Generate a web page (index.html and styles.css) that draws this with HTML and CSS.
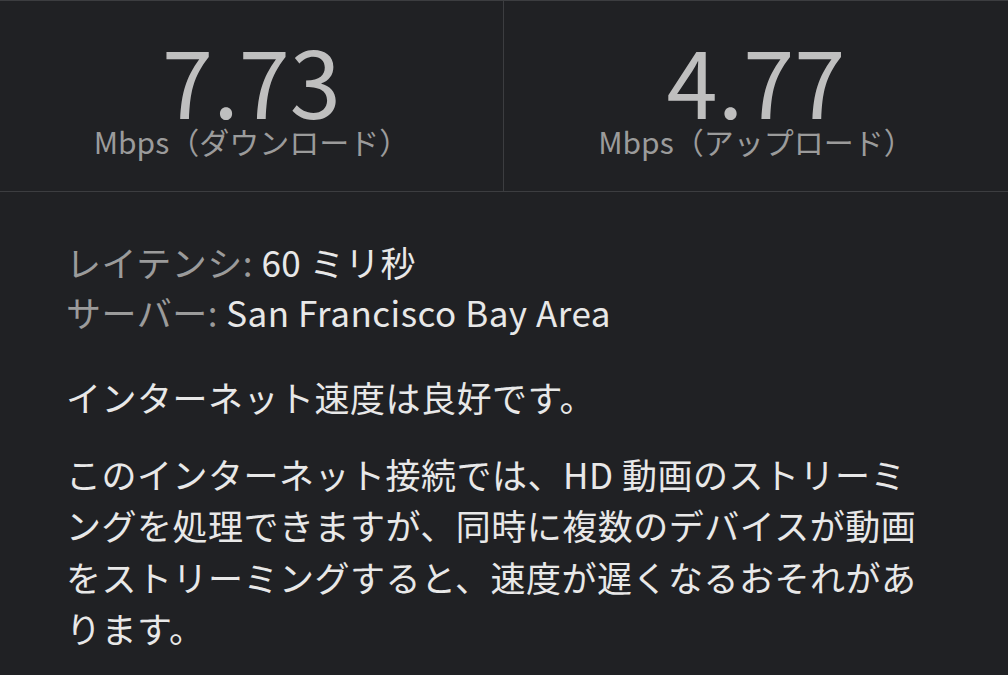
FILE: index.html
```html
<!DOCTYPE html>
<html lang="ja">
<head>
<meta charset="utf-8">
<link rel="stylesheet" href="styles.css">
</head>
<body>
<div class="stats">
  <div class="stat">
    <div class="value">7.73</div>
    <div class="unit">Mbps（ダウンロード）</div>
  </div>
  <div class="stat stat-right">
    <div class="value">4.77</div>
    <div class="unit">Mbps（アップロード）</div>
  </div>
</div>
<div class="details">
  <div class="meta">
    <div class="row"><span class="label">レイテンシ:</span> <span class="val">60 ミリ秒</span></div>
    <div class="row"><span class="label">サーバー:</span> <span class="val">San Francisco Bay Area</span></div>
  </div>
  <p class="summary">インターネット速度は良好です。</p>
  <p class="desc">このインターネット接続では、HD 動画のストリーミングを処理できますが、同時に複数のデバイスが動画をストリーミングすると、速度が遅くなるおそれがあります。</p>
</div>
</body>
</html>
```

FILE: styles.css
```css
html, body {
  margin: 0;
  padding: 0;
  background: #202124;
  font-family: "Noto Sans CJK JP", "Noto Sans", sans-serif;
  width: 1008px;
  height: 675px;
  overflow: hidden;
}

.stats {
  display: grid;
  grid-template-columns: 503px 1fr;
  border-top: 1px solid #3c3d40;
  border-bottom: 1px solid #3c3d40;
  box-sizing: border-box;
  height: 192px;
}

.stat {
  display: flex;
  flex-direction: column;
  align-items: center;
  padding-top: 32px;
}

.stat-right {
  border-left: 1px solid #3c3d40;
}

.value {
  font-size: 92px;
  line-height: 92px;
  color: #bfbfbf;
}

.unit {
  font-size: 30px;
  line-height: 32px;
  color: #9b9b9b;
}

.details {
  padding: 45px 0 0 66px;
  width: 866px;
  letter-spacing: 0.5px;
}

.meta {
  font-size: 35px;
  line-height: 50px;
}

.label {
  color: #9b9b9b;
}

.val {
  color: #e8e8e8;
}

.summary {
  margin: 34px 0 0;
  font-size: 35px;
  line-height: 52px;
  color: #e8e8e8;
}

.desc {
  margin: 25px 0 0;
  font-size: 35px;
  line-height: 51.33px;
  color: #e8e8e8;
}
```
